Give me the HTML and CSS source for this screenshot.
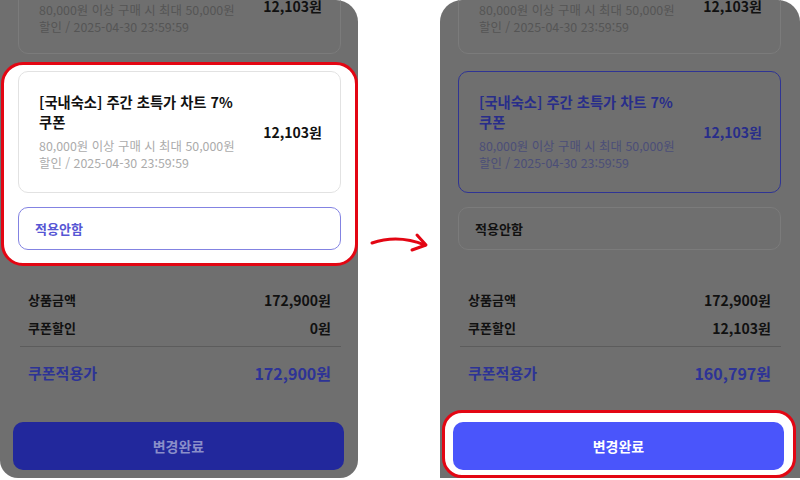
FILE: index.html
```html
<!DOCTYPE html>
<html lang="ko">
<head>
  <meta charset="UTF-8">
  <meta name="viewport" content="width=device-width, initial-scale=1.0">
  <title>쿠폰 변경 - 적용 전후</title>
  <link rel="stylesheet" href="styles.css">
</head>
<body>
  <div class="stage">
    <!-- Before: coupon selected, not applied -->
    <div class="phone phone-before">
      <div class="coupon coupon-peek">
        <div class="coupon-text">
          <div class="coupon-title">[국내숙소] 주말 특가 7% 쿠폰</div>
          <div class="coupon-desc">80,000원 이상 구매 시 최대 50,000원 할인 / 2025-04-30 23:59:59</div>
        </div>
        <div class="coupon-price">12,103원</div>
      </div>

      <div class="pick is-marked">
        <div class="coupon coupon-light">
          <div class="coupon-text">
            <div class="coupon-title">[국내숙소] 주간 초특가 차트 7% 쿠폰</div>
            <div class="coupon-desc">80,000원 이상 구매 시 최대 50,000원 할인 / 2025-04-30 23:59:59</div>
          </div>
          <div class="coupon-price">12,103원</div>
        </div>
        <div class="none-btn none-active">적용안함</div>
      </div>

      <div class="summary">
        <div class="row"><span>상품금액</span><span class="val">172,900원</span></div>
        <div class="row"><span>쿠폰할인</span><span class="val">0원</span></div>
        <div class="row total"><span>쿠폰적용가</span><span class="val">172,900원</span></div>
      </div>

      <div class="submit-wrap">
        <button class="submit submit-dim">변경완료</button>
      </div>
    </div>

    <div class="arrow">
      <svg width="82" height="30" viewBox="0 0 82 30">
        <path d="M14 18 Q40 9 67 20" fill="none" stroke="#e30613" stroke-width="3" stroke-linecap="round"/>
        <path d="M59 10 L68 20 L54 25" fill="none" stroke="#e30613" stroke-width="3" stroke-linecap="round" stroke-linejoin="round"/>
      </svg>
    </div>

    <!-- After: coupon applied -->
    <div class="phone phone-after">
      <div class="coupon coupon-peek">
        <div class="coupon-text">
          <div class="coupon-title">[국내숙소] 주말 특가 7% 쿠폰</div>
          <div class="coupon-desc">80,000원 이상 구매 시 최대 50,000원 할인 / 2025-04-30 23:59:59</div>
        </div>
        <div class="coupon-price">12,103원</div>
      </div>

      <div class="pick">
        <div class="coupon coupon-selected">
          <div class="coupon-text">
            <div class="coupon-title">[국내숙소] 주간 초특가 차트 7% 쿠폰</div>
            <div class="coupon-desc">80,000원 이상 구매 시 최대 50,000원 할인 / 2025-04-30 23:59:59</div>
          </div>
          <div class="coupon-price">12,103원</div>
        </div>
        <div class="none-btn">적용안함</div>
      </div>

      <div class="summary">
        <div class="row"><span>상품금액</span><span class="val">172,900원</span></div>
        <div class="row"><span>쿠폰할인</span><span class="val">12,103원</span></div>
        <div class="row total"><span>쿠폰적용가</span><span class="val">160,797원</span></div>
      </div>

      <div class="submit-wrap is-marked">
        <button class="submit">변경완료</button>
      </div>
    </div>
  </div>
</body>
</html>
```

FILE: styles.css
```css
/* Base */
body {
  margin: 0;
  font-family: "Noto Sans CJK KR", "Noto Sans", sans-serif;
  background: #fff;
  color: #111;
}
.stage {
  display: flex;
  height: 480px;
}

/* Phone frames (dimmed behind a sheet) */
.phone {
  width: 358px;
  height: 478px;
  flex-shrink: 0;
  box-sizing: border-box;
  background: #6f6f6f;
  overflow: hidden;
  display: flex;
  flex-direction: column;
}
.phone-before {
  border-radius: 0 22px 18px 18px;
}
.phone-after {
  width: 360px;
  padding-right: 2px;
  border-radius: 22px 22px 0 0;
}

/* Arrow between frames */
.arrow {
  flex: 1;
  display: flex;
  align-items: center;
}

/* Coupon cards */
.coupon {
  display: flex;
  align-items: center;
  justify-content: space-between;
  padding: 20px 18px 20px 20px;
  border: 1px solid #7b7b7b;
  border-radius: 10px;
}
.coupon-text {
  width: 205px;
  word-break: keep-all;
}
.coupon-title {
  font-size: 14.3px;
  line-height: 20px;
  font-weight: 700;
}
.coupon-desc {
  margin-top: 6px;
  font-size: 12.4px;
  line-height: 17px;
  color: #555;
}
.coupon-price {
  font-size: 14px;
  font-weight: 700;
}
.coupon-peek {
  margin: -45px 17px 0 18px;
  padding-bottom: 17px;
}
.coupon-peek .coupon-title {
  white-space: nowrap;
}
.coupon-light {
  background: #fff;
  border-color: #e2e2e2;
}
.coupon-light .coupon-desc {
  color: #ababab;
}
.coupon-selected {
  border-color: #2f3494;
}
.coupon-selected .coupon-title,
.coupon-selected .coupon-price {
  color: #282d8a;
}
.coupon-selected .coupon-desc {
  color: #4b4e78;
}

/* Highlight ring */
.pick {
  margin: 8px 0 0 1px;
  padding: 6px 14px 13px 14px;
  border: 3px solid transparent;
  border-radius: 22px;
}

.none-btn {
  margin-top: 14px;
  height: 41px;
  line-height: 41px;
  padding: 0 16px;
  border: 1px solid #7b7b7b;
  border-radius: 10px;
  font-size: 13px;
  font-weight: 700;
}
.none-active {
  border-color: #8383e2;
  color: #5656d4;
}

/* Price summary */
.summary {
  margin: 24px 17px 0 20px;
}
.row {
  display: flex;
  justify-content: space-between;
  padding: 0 10px 0 8px;
  font-size: 13px;
  line-height: 20px;
  font-weight: 700;
}
.row + .row {
  margin-top: 8px;
}
.row .val {
  font-size: 14px;
}
.row.total {
  margin-top: 8px;
  padding-top: 14px;
  border-top: 1px solid #5c5c5c;
  font-size: 15px;
  line-height: 24px;
  color: #2d3396;
}
.row.total .val {
  font-size: 16px;
}

/* Submit */
.submit-wrap {
  margin: auto 2px 0 2px;
  padding: 9px 9px 5px 8px;
  border: 3px solid transparent;
  border-radius: 20px;
}
.submit {
  display: block;
  width: 100%;
  height: 48px;
  border: none;
  border-radius: 10px;
  background: #4a55fb;
  color: #fff;
  font-family: inherit;
  font-size: 14px;
  font-weight: 700;
}
.submit-dim {
  background: #22289c;
  color: #8a8fc9;
}

/* Red marker around the highlighted part */
.pick.is-marked,
.submit-wrap.is-marked {
  border-color: #e30613;
  background: #fff;
}
```
